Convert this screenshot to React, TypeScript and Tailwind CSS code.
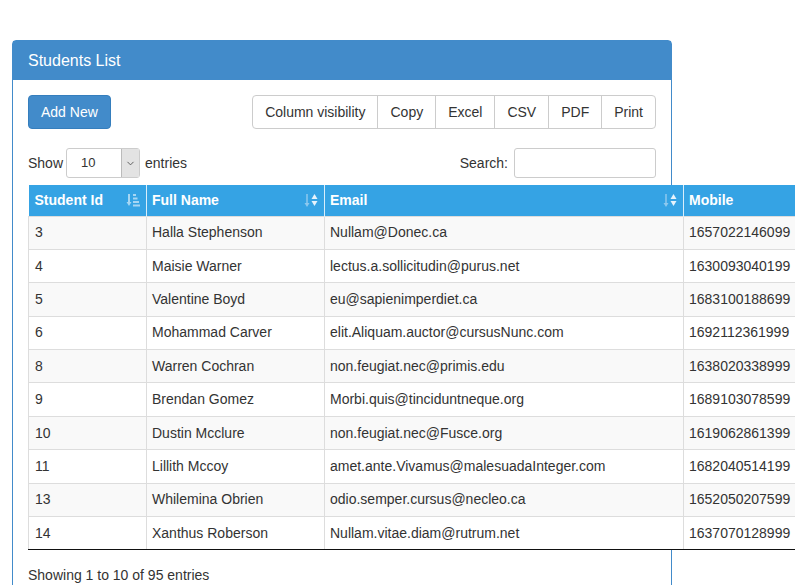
import { ChevronDown } from "lucide-react";

type Student = { id: number; name: string; email: string; mobile: string };

const students: Student[] = [
  { id: 3, name: "Halla Stephenson", email: "Nullam@Donec.ca", mobile: "1657022146099" },
  { id: 4, name: "Maisie Warner", email: "lectus.a.sollicitudin@purus.net", mobile: "1630093040199" },
  { id: 5, name: "Valentine Boyd", email: "eu@sapienimperdiet.ca", mobile: "1683100188699" },
  { id: 6, name: "Mohammad Carver", email: "elit.Aliquam.auctor@cursusNunc.com", mobile: "1692112361999" },
  { id: 8, name: "Warren Cochran", email: "non.feugiat.nec@primis.edu", mobile: "1638020338999" },
  { id: 9, name: "Brendan Gomez", email: "Morbi.quis@tinciduntneque.org", mobile: "1689103078599" },
  { id: 10, name: "Dustin Mcclure", email: "non.feugiat.nec@Fusce.org", mobile: "1619062861399" },
  { id: 11, name: "Lillith Mccoy", email: "amet.ante.Vivamus@malesuadaInteger.com", mobile: "1682040514199" },
  { id: 13, name: "Whilemina Obrien", email: "odio.semper.cursus@necleo.ca", mobile: "1652050207599" },
  { id: 14, name: "Xanthus Roberson", email: "Nullam.vitae.diam@rutrum.net", mobile: "1637070128999" },
];

const exportButtons = ["Column visibility", "Copy", "Excel", "CSV", "PDF", "Print"];

// sorted column icon (arrow + bars)
function SortedIcon() {
  return (
    <svg width="14" height="14" viewBox="0 0 14 14" className="opacity-70">
      <path d="M3 1v9" stroke="#d6ecfa" strokeWidth="2" />
      <path d="M0.5 9l2.5 4 2.5-4z" fill="#d6ecfa" />
      <rect x="7" y="1" width="3" height="2" fill="#d6ecfa" />
      <rect x="7" y="4.5" width="4.5" height="2" fill="#d6ecfa" />
      <rect x="7" y="8" width="6" height="2" fill="#d6ecfa" />
      <rect x="7" y="11.5" width="7" height="2" fill="#d6ecfa" />
    </svg>
  );
}

// unsorted column icon (up/down)
function SortIcon() {
  return (
    <svg width="14" height="16" viewBox="0 0 14 16">
      <path d="M3 2v10" stroke="#8ec9ef" strokeWidth="1.5" />
      <path d="M0.5 11l2.5 4 2.5-4z" fill="#8ec9ef" />
      <path d="M7.5 7l3-5 3 5z" fill="#e6f3fc" />
      <path d="M7.5 9l3 5 3-5z" fill="#e6f3fc" />
    </svg>
  );
}

export default function App() {
  return (
    <div className="h-[585px] w-[795px] overflow-hidden bg-white font-['Liberation_Sans',Arial,sans-serif] text-[14px] text-[#333]">
      <div className="ml-[12px] mt-[40px] w-[660px] rounded-t-[4px] border border-[#428bca]">
        <div className="flex h-[39px] items-center bg-[#428bca] px-[15px] text-[16px] text-white">
          Students List
        </div>

        <div className="px-[15px] pb-[30px] pt-[15px]">
          <div className="flex items-center justify-between">
            <button className="h-[34px] rounded-[4px] border border-[#357ebd] bg-[#428bca] px-[12px] text-white">
              Add New
            </button>
            <div className="flex h-[34px] rounded-[4px] border border-[#ccc]">
              {exportButtons.map((b, i) => (
                <div
                  key={b}
                  className={`flex items-center px-[12px] ${i > 0 ? "border-l border-[#ccc]" : ""}`}
                >
                  {b}
                </div>
              ))}
            </div>
          </div>

          <div className="mt-[19px] flex h-[30px] items-center justify-between">
            <div className="flex items-center">
              <span>Show</span>
              <div className="ml-[3px] flex h-[30px] w-[74px] items-center rounded-[3px] border border-[#ccc]">
                <span className="flex-1 pl-[14px] text-[13px]">10</span>
                <span className="flex h-full w-[18px] items-center justify-center border-l border-[#bbb] bg-[#e3e3e3]">
                  <ChevronDown size={11} strokeWidth={2} className="text-[#555]" />
                </span>
              </div>
              <span className="ml-[5px]">entries</span>
            </div>
            <div className="flex items-center gap-[6px]">
              <span>Search:</span>
              <div className="h-[30px] w-[142px] rounded-[3px] border border-[#ccc]" />
            </div>
          </div>

          <table className="mt-[7px] w-[785px] max-w-none table-fixed border-collapse">
            <colgroup>
              <col className="w-[118px]" />
              <col className="w-[178px]" />
              <col className="w-[359px]" />
              <col className="w-[130px]" />
            </colgroup>
            <thead>
              <tr className="h-[31px] bg-[#35a3e4] text-left font-bold text-white">
                <th className="border-r border-[#d9eefb] pl-[6px] pr-[6px]">
                  <div className="flex items-center justify-between">
                    Student Id <SortedIcon />
                  </div>
                </th>
                <th className="border-r border-[#d9eefb] pl-[5px] pr-[6px]">
                  <div className="flex items-center justify-between">
                    Full Name <SortIcon />
                  </div>
                </th>
                <th className="border-r border-[#d9eefb] pl-[5px] pr-[6px]">
                  <div className="flex items-center justify-between">
                    Email <SortIcon />
                  </div>
                </th>
                <th className="px-[5px]">Mobile</th>
              </tr>
            </thead>
            <tbody>
              {students.map((s, i) => {
                const last = i === students.length - 1;
                const cell = `border border-[#ddd] ${last ? "border-b-[#111]" : ""}`;
                return (
                  <tr key={s.id} className={`h-[33.4px] ${i % 2 === 0 ? "bg-[#f9f9f9]" : "bg-white"}`}>
                    <td className={`${cell} px-[6px]`}>{s.id}</td>
                    <td className={`${cell} px-[5px]`}>{s.name}</td>
                    <td className={`${cell} px-[5px]`}>{s.email}</td>
                    <td className={`${cell} px-[5px]`}>{s.mobile}</td>
                  </tr>
                );
              })}
            </tbody>
          </table>

          <div className="mt-[15px]">Showing 1 to 10 of 95 entries</div>
        </div>
      </div>
    </div>
  );
}
